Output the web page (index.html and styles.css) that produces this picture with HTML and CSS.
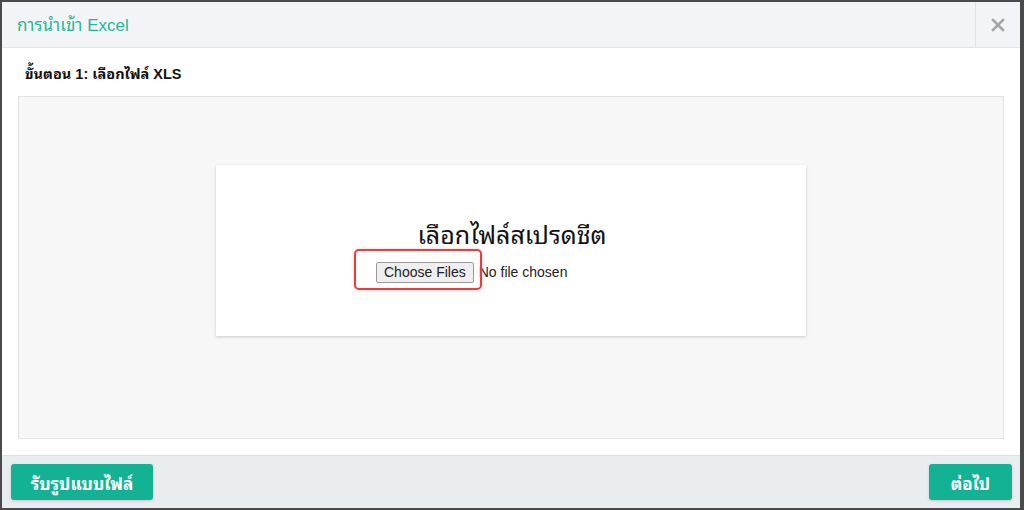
FILE: index.html
```html
<!DOCTYPE html>
<html lang="th">
<head>
<meta charset="utf-8">
<title>การนำเข้า Excel</title>
<link rel="stylesheet" href="styles.css">
</head>
<body>
<div class="frame">
  <div class="modal">
    <div class="modal-header">
      <div class="modal-title">การนำเข้า Excel</div>
      <div class="close">
        <svg width="14" height="14" viewBox="0 0 14 14"><path d="M2 2 L12 12 M12 2 L2 12" stroke="#a6a6a6" stroke-width="2.6" stroke-linecap="square"/></svg>
      </div>
    </div>
    <div class="modal-body">
      <div class="step">ขั้นตอน 1: เลือกไฟล์ XLS</div>
      <div class="dropzone">
        <div class="card">
          <div class="card-title">เลือกไฟล์สเปรดชีต</div>
          <div class="file-row">
            <span class="highlight"></span>
            <span class="file-btn">Choose Files</span>
            <span class="file-text">No file chosen</span>
          </div>
        </div>
      </div>
    </div>
    <div class="modal-footer">
      <button class="btn">รับรูปแบบไฟล์</button>
      <button class="btn">ต่อไป</button>
    </div>
  </div>
</div>
</body>
</html>
```
FILE: styles.css
```css
* { box-sizing: border-box; }
html, body { margin: 0; padding: 0; }
body {
  width: 1024px;
  height: 510px;
  overflow: hidden;
  font-family: "Liberation Sans", "Noto Sans Thai Looped", "Noto Sans Thai", "Noto Sans", sans-serif;
  background: #4a4a4a;
}
.frame {
  padding: 2px 4px 2px 2px;
  height: 510px;
}
.modal {
  background: #fff;
  height: 506px;
  display: flex;
  flex-direction: column;
}
.modal-header {
  height: 46px;
  background: #f3f4f7;
  border-bottom: 1px solid #e3e5e8;
  display: flex;
  align-items: stretch;
}
.modal-title {
  flex: 1;
  padding: 0 0 3px 15px;
  display: flex;
  align-items: center;
  color: #22b89a;
  font-size: 17px;
}
.close {
  width: 45px;
  border-left: 1px solid #e0e2e5;
  display: flex;
  align-items: center;
  justify-content: center;
}
.modal-body {
  flex: 1;
  padding: 0 16px 16px 16px;
  display: flex;
  flex-direction: column;
}
.step {
  height: 48px;
  padding: 13px 0 0 7px;
  font-size: 14.5px;
  font-weight: bold;
  color: #111;
}
.dropzone {
  flex: 1;
  background: #f7f7f7;
  border: 1px solid #e3e3e3;
  display: flex;
  justify-content: center;
  align-items: flex-start;
  padding-top: 68px;
}
.card {
  width: 590px;
  height: 171px;
  background: #fff;
  box-shadow: 0 1px 3px rgba(0,0,0,0.18);
  padding-top: 54px;
}
.card-title {
  text-align: center;
  font-size: 25px;
  color: #111;
  line-height: 32px;
  padding-left: 2px;
}
.file-row {
  position: relative;
  display: flex;
  align-items: center;
  padding-left: 160px;
  margin-top: 10px;
  height: 22px;
  font-size: 14px;
}
.file-btn {
  display: inline-flex;
  align-items: center;
  height: 21px;
  padding: 0 7px;
  background: #efefef;
  border: 1px solid #9a9a9a;
  border-radius: 2px;
  color: #222;
  font-size: 14px;
}
.file-text {
  margin-left: 5px;
  color: #222;
}
.highlight {
  position: absolute;
  left: 138px;
  top: -12px;
  width: 128px;
  height: 41px;
  border: 2px solid #ee3b3b;
  border-radius: 5px;
  box-shadow: 0 0 3px rgba(238,59,59,0.35);
}
.modal-footer {
  height: 53px;
  background: #e9edf0;
  border-top: 1px solid #dde1e5;
  display: flex;
  justify-content: space-between;
  align-items: center;
  padding: 0 8px 0 9px;
}
.btn {
  height: 36px;
  padding: 0 16px;
  background: #14b295;
  border: none;
  border-radius: 3px;
  color: #fff;
  font-family: "Liberation Sans", "Noto Sans Thai Looped", "Noto Sans Thai", "Noto Sans", sans-serif;
  font-size: 17px;
  font-weight: bold;
  box-shadow: 0 1px 3px rgba(0,0,0,0.15);
}
.btn:first-child { width: 142px; }
.btn:last-child { width: 83px; }
```
